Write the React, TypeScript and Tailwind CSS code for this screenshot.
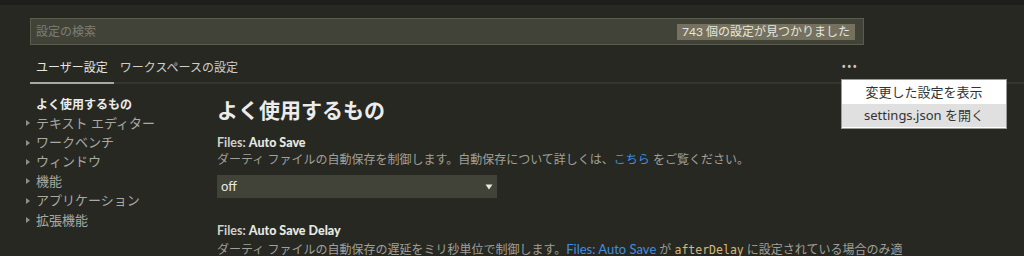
import React from 'react';

const jp = { fontFamily: '"Noto Sans", "Noto Sans CJK JP", sans-serif' };
const ui = { fontFamily: 'Lato, "Noto Sans CJK JP", sans-serif' };
const mono = { fontFamily: '"DejaVu Sans Mono", "Liberation Mono", monospace' };

const groups = ['テキスト エディター', 'ワークベンチ', 'ウィンドウ', '機能', 'アプリケーション', '拡張機能'];

function Caret() {
  return (
    <svg width="6" height="8" viewBox="0 0 6 8" className="shrink-0">
      <path d="M1 1 L5 4 L1 7 Z" fill="#8f8f88" />
    </svg>
  );
}

export default function App() {
  return (
    <div className="relative h-[256px] w-[1024px] overflow-hidden bg-[#272822] text-[#f8f8f2]" style={jp}>
      <div className="h-[5px] bg-[#1e1f1c]" />

      {/* search */}
      <div className="ml-[30px] mt-[13px] flex h-[27px] w-[834px] items-center justify-between border border-[#5c5c4c] bg-[#414339] pl-[5px] pr-[8px]">
        <span className="text-[12px] text-[#7f7e72]">設定の検索</span>
        <span className="bg-[#75715e] px-[5px] text-[12px] leading-[16px] text-[#e6e6de]" style={ui}>743 個の設定が見つかりました</span>
      </div>

      {/* tabs */}
      <div className="ml-[30px] mt-[11px] flex h-[28px] items-end border-b-2 border-[#34352e]">
        <div className="-mb-[2px] border-b-2 border-[#a9a99f] px-[6px] pb-[5px] text-[12px] text-[#e6e6e0]">ユーザー設定</div>
        <div className="px-[6px] pb-[5px] text-[12px] text-[#cfcfc8]">ワークスペースの設定</div>
        <div className="ml-auto mr-[166px] pb-[9px] text-[12px] leading-none tracking-[1px] text-[#c8c8c0]">•••</div>
      </div>

      <div className="flex">
        {/* tree */}
        <div className="w-[187px] shrink-0 pl-[25px] pt-[13px]">
          <div className="flex h-[16.5px] items-center pl-[11px] text-[12px] font-bold text-[#ececec]">よく使用するもの</div>
          {groups.map((g) => (
            <div key={g} className="flex h-[19.4px] items-center gap-[5px] text-[13px] leading-none text-[#a9a9a2]">
              <Caret />
              <span>{g}</span>
            </div>
          ))}
        </div>

        {/* main */}
        <div className="pl-[30px] pt-[11px]">
          <div className="text-[21px] font-bold leading-[30px] text-[#ececec]">よく使用するもの</div>
          <div className="mt-[10px] text-[12.5px] leading-[16px] text-[#e8e8e2]" style={ui}>
            <span className="font-bold text-[#d0d0ca]">Files: </span>
            <span className="font-black">Auto Save</span>
          </div>
          <div className="text-[12px] leading-[18px] text-[#a0a09a]">
            ダーティ ファイルの自動保存を制御します。自動保存について詳しくは、<span className="text-[#3e8fe3]">こちら</span> をご覧ください。
          </div>
          <div className="mt-[6px] flex h-[23px] w-[280px] items-center justify-between bg-[#414339] pl-[4px] pr-[4px]">
            <span className="text-[13px] text-[#e8e8e2]" style={ui}>off</span>
            <svg width="8" height="6" viewBox="0 0 8 6">
              <path d="M0.5 0.5 L7.5 0.5 L4 5.5 Z" fill="#e8e8e2" />
            </svg>
          </div>
          <div className="mt-[25px] text-[12.5px] leading-[16px] text-[#e8e8e2]" style={ui}>
            <span className="font-bold text-[#d0d0ca]">Files: </span>
            <span className="font-black">Auto Save Delay</span>
          </div>
          <div className="mt-[1px] whitespace-nowrap text-[12px] leading-[18px] text-[#a0a09a]">
            ダーティ ファイルの自動保存の遅延をミリ秒単位で制御します。<span className="text-[13px] text-[#3e8fe3]" style={ui}>Files: Auto Save</span> が{' '}
            <span className="text-[11.5px] text-[#d6b97c]" style={mono}>afterDelay</span> に設定されている場合のみ適
          </div>
        </div>
      </div>

      {/* context menu */}
      <div className="absolute left-[841px] top-[79px] w-[166px] border border-[#9a9a9a] bg-white py-px text-[13px] text-[#333333]">
        <div className="flex h-[23px] items-center justify-center">変更した設定を表示</div>
        <div className="flex h-[23px] items-center justify-center bg-[#e0e0e0]">settings.json を開く</div>
      </div>
    </div>
  );
}
